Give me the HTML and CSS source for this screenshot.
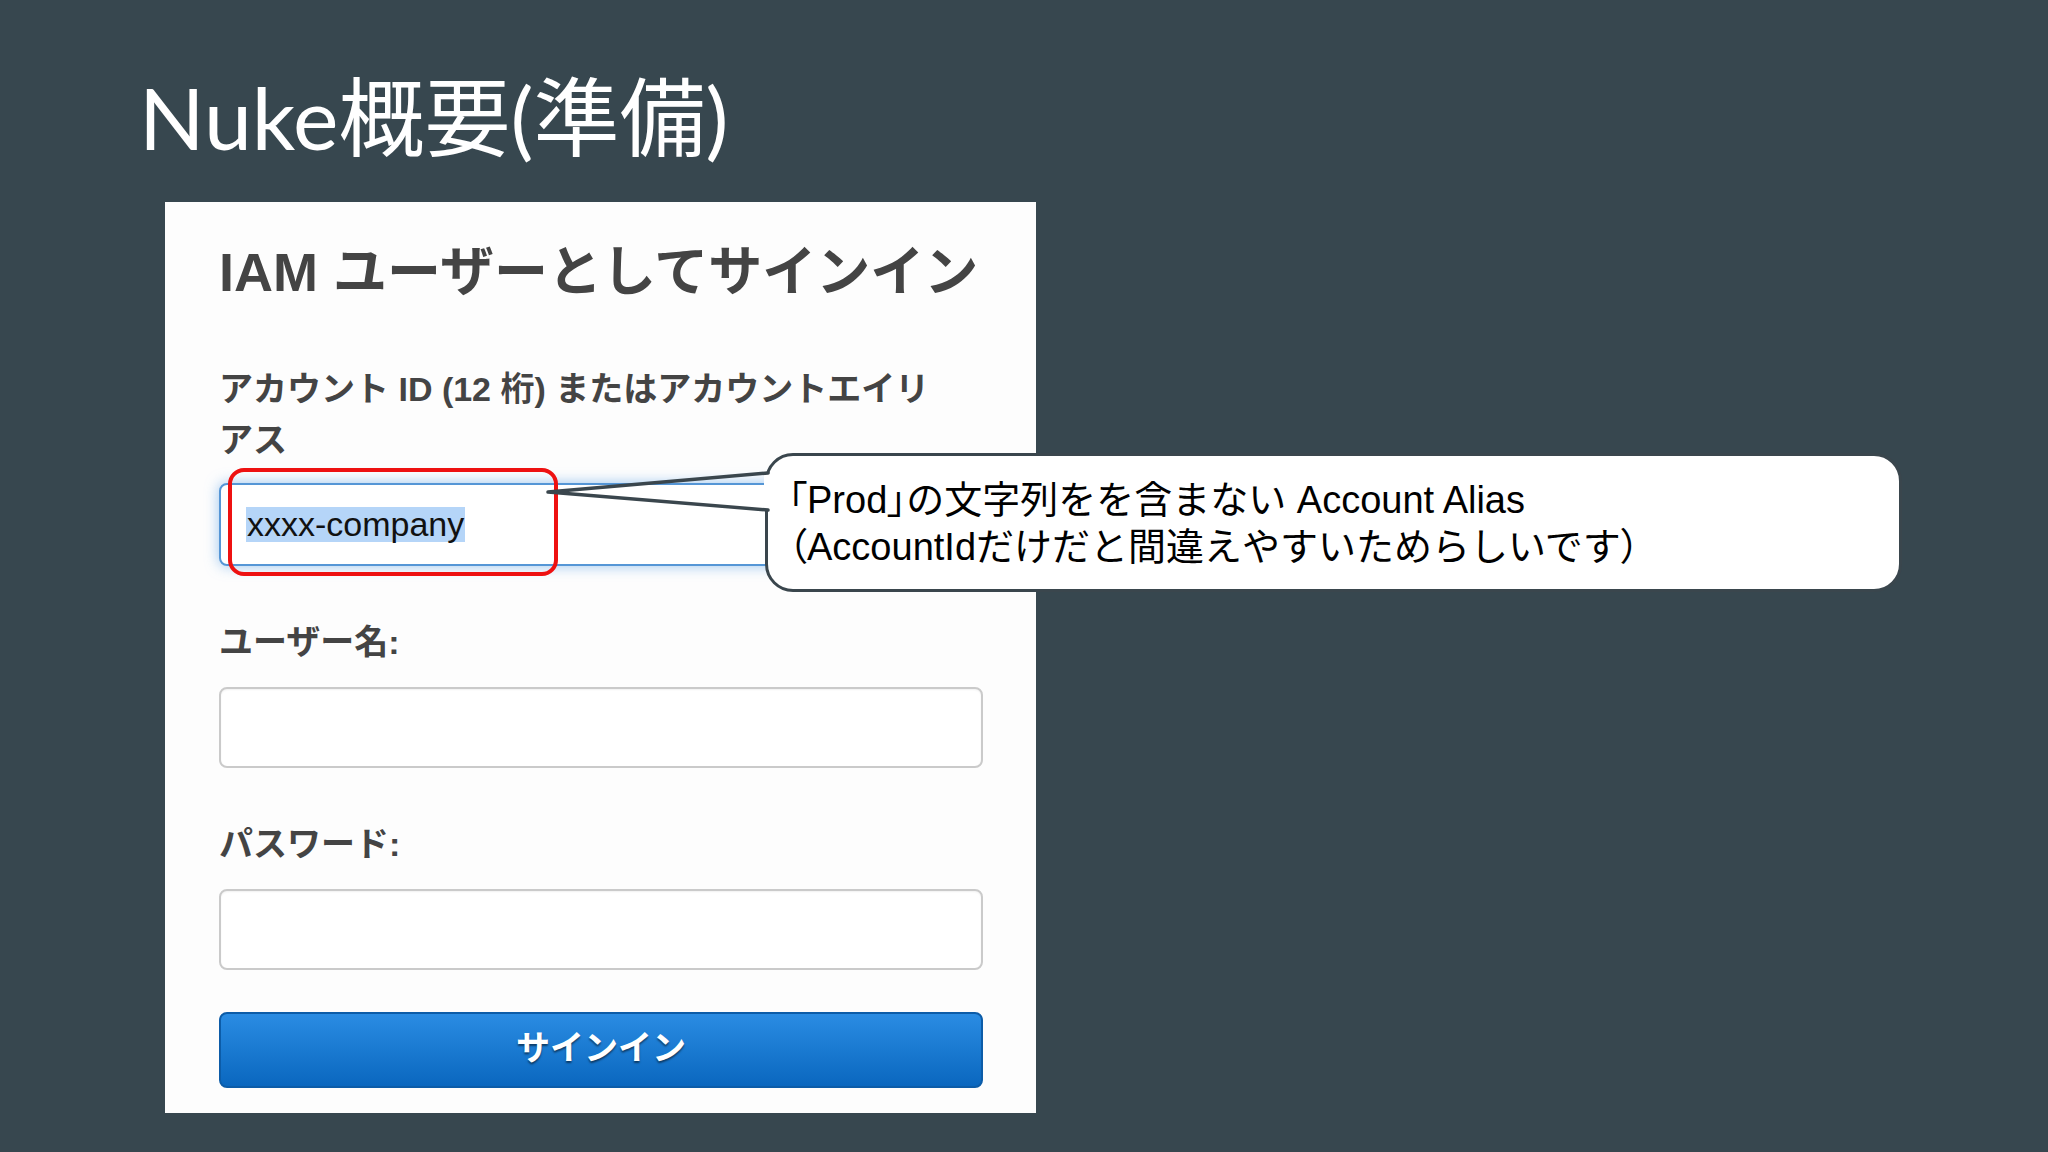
FILE: index.html
```html
<!DOCTYPE html>
<html lang="ja">
<head>
<meta charset="utf-8">
<title>Nuke概要(準備)</title>
<link rel="stylesheet" href="styles.css">
</head>
<body>
<div class="slide">
  <h1 class="slide-title">Nuke概要(準備)</h1>

  <main class="card">
    <h2 class="card-title">IAM ユーザーとしてサインイン</h2>
    <div class="field-label two-line">アカウント ID (12 桁) またはアカウントエイリ<br>アス</div>
    <div class="input focused"><span class="selected">xxxx-company</span></div>
    <div class="field-label">ユーザー名:</div>
    <div class="input"></div>
    <div class="field-label">パスワード:</div>
    <div class="input"></div>
    <div class="signin-btn">サインイン</div>
  </main>

  <div class="highlight-box"></div>

  <div class="callout">
    <p class="callout-line"><span class="punct">「</span>Prod<span class="punct">」</span>の文字列をを含まない Account Alias</p>
    <p class="callout-line"><span class="punct">（</span>AccountIdだけだと間違えやすいためらしいです<span class="punct">）</span></p>
  </div>

  <svg class="callout-tail" width="240" height="60" viewBox="0 0 240 60">
    <rect x="224" y="9" width="8" height="36" fill="#ffffff"/>
    <polyline points="228,8 8,27 228,45" fill="none" stroke="#3a464d" stroke-width="3.5" stroke-linejoin="round" stroke-linecap="round"/>
  </svg>
</div>
</body>
</html>
```

FILE: styles.css
```css
* { box-sizing: border-box; }

html, body {
  margin: 0;
  padding: 0;
  background: #37474f;
}

.slide {
  position: relative;
  width: 2048px;
  height: 1152px;
  overflow: hidden;
  background: #37474f;
}

.slide-title {
  margin: 0;
  height: 202px;
  padding: 74px 0 0 139px;
  font-family: Lato, "Noto Sans CJK JP", sans-serif;
  font-weight: 400;
  font-size: 86px;
  line-height: 86px;
  color: #ffffff;
}

.card {
  display: flex;
  flex-direction: column;
  margin-left: 165px;
  width: 871px;
  height: 911px;
  padding: 35px 53px 25px 54px;
  background: #fdfdfd;
  font-family: "Liberation Sans", "Noto Sans CJK JP", sans-serif;
  color: #444444;
}

.card-title {
  margin: 0;
  height: 70px;
  font-size: 54px;
  line-height: 70px;
  font-weight: 700;
  white-space: nowrap;
}

.field-label {
  margin-top: 51px;
  height: 51px;
  font-size: 34px;
  line-height: 51px;
  font-weight: 700;
  white-space: nowrap;
}

.field-label.two-line {
  margin-top: 57px;
  height: 102px;
}

.input {
  margin-top: 19px;
  height: 81px;
  border: 2px solid #cacaca;
  border-radius: 8px;
  background: #ffffff;
  box-shadow: inset 0 1px 2px rgba(0, 0, 0, 0.06);
  display: flex;
  align-items: center;
  padding-left: 25px;
}

.input.focused {
  margin-top: 17px;
  height: 83px;
  border-color: #5596d6;
  box-shadow: 0 0 14px rgba(90, 160, 230, 0.6);
}

.selected {
  display: inline-block;
  height: 35px;
  line-height: 35px;
  padding: 0 1px;
  font-family: "Liberation Sans", sans-serif;
  font-size: 34px;
  color: #111111;
  background: #b5d5f8;
}

.signin-btn {
  margin-top: 42px;
  height: 76px;
  padding-bottom: 9px;
  border: 2px solid #0c5ca8;
  border-radius: 8px;
  background: linear-gradient(#2a8ce3, #0a67bf);
  color: #ffffff;
  font-size: 34px;
  font-weight: 700;
  display: flex;
  align-items: center;
  justify-content: center;
  text-shadow: 0 2px 2px rgba(0, 0, 0, 0.5);
}

.highlight-box {
  position: absolute;
  left: 228px;
  top: 468px;
  width: 330px;
  height: 108px;
  border: 4px solid #ee1111;
  border-radius: 16px;
}

.callout {
  position: absolute;
  left: 765px;
  top: 453px;
  width: 1137px;
  height: 139px;
  border: 3px solid #3a464d;
  border-radius: 28px;
  background: #ffffff;
  padding: 21px 0 0 20px;
  font-family: "Liberation Sans", "Noto Sans CJK JP", sans-serif;
  font-size: 38px;
  line-height: 47px;
  color: #000000;
}

.callout-line {
  margin: 0;
  white-space: nowrap;
}

.punct {
  font-feature-settings: "palt";
}

.callout-tail {
  position: absolute;
  left: 540px;
  top: 465px;
  overflow: visible;
}
```
